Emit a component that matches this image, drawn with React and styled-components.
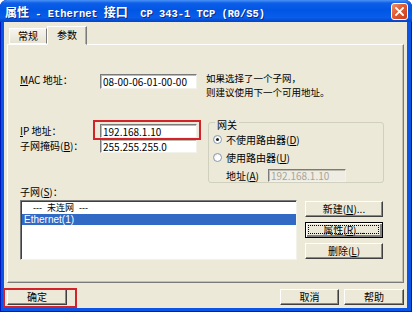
import React from 'react'
import styled, { createGlobalStyle } from 'styled-components'

// STYLE
const GlobalStyle = createGlobalStyle`
  html, body {
    margin: 0;
    padding: 0;
    background: #fff;
  }
  body {
    font-family: "Noto Sans CJK SC", "Noto Sans", sans-serif;
    font-size: 10px;
    color: #000;
  }
`

const Window = styled.div`
  width: 412px;
  height: 312px;
  box-sizing: border-box;
  display: flex;
  flex-direction: column;
  background: #0a54e6;
  border-radius: 7px 7px 0 0;
  box-shadow: inset 0 0 0 1px #0019b8;
  overflow: hidden;
`

const TitleBar = styled.div`
  height: 22px;
  flex: none;
  display: flex;
  align-items: center;
  justify-content: space-between;
  padding: 0 4px 0 5px;
  background: linear-gradient(
    180deg,
    #4a93f5 0%,
    #0e5ee9 14%,
    #0056e4 45%,
    #0a5deb 80%,
    #0344c8 100%
  );
  color: #fff;
  font-family: "Liberation Mono", "Noto Sans CJK SC", monospace;
  font-weight: bold;
  font-size: 10.4px;
  text-shadow: 1px 1px 0 #0a2a8a;
  white-space: pre;

  .cjk {
    font-family: "Noto Sans CJK SC", sans-serif;
    font-size: 12px;
  }
`

const CloseBtn = styled.div`
  width: 17px;
  height: 17px;
  box-sizing: border-box;
  border: 1px solid #fff;
  border-radius: 3px;
  background: linear-gradient(135deg, #f0906a 0%, #e05a32 45%, #c8401c 100%);
  display: flex;
  align-items: center;
  justify-content: center;
  margin-top: 1px;
`

const Frame = styled.div`
  flex: 1;
  display: flex;
  padding: 0 5px 4px 4px;
`

const Client = styled.div`
  flex: 1;
  display: flex;
  flex-direction: column;
  background: #ece9d8;
  padding: 4px 3px 0 3px;
`

const TabStrip = styled.div`
  height: 18px;
  display: flex;
  align-items: flex-end;
  padding-left: 2px;
  position: relative;
  z-index: 1;
`

const Tab = styled.div`
  width: ${(p) => p.$w}px;
  height: ${(p) => (p.$active ? 19 : 16)}px;
  margin-bottom: ${(p) => (p.$active ? -1 : 0)}px;
  box-sizing: border-box;
  border: 1px solid;
  border-color: #fff #7a7a7a ${(p) => (p.$active ? '#ece9d8' : '#fff')} #fff;
  box-shadow: ${(p) => (p.$active ? 'inset -1px 0 0 #b0ada0' : 'none')};
  background: ${(p) => (p.$active ? '#ece9d8' : 'linear-gradient(#f6f5ef, #e6e3d4)')};
  display: flex;
  justify-content: center;
  padding-top: ${(p) => (p.$active ? 2 : 1)}px;
  line-height: 12px;
`

const Panel = styled.div`
  height: 239px;
  flex: none;
  box-sizing: border-box;
  border: 1px solid;
  border-color: #fff #7a7a7a #7a7a7a #fff;
  box-shadow: inset -1px -1px 0 #c4c0b0;
  padding: 29px 0 0 12px;
  display: flex;
  flex-direction: column;
`

const Row = styled.div`
  display: flex;
  align-items: ${(p) => p.$align || 'center'};
  margin-top: ${(p) => p.$mt || 0}px;
`

const Label = styled.div`
  width: ${(p) => p.$w || 80}px;
  flex: none;
  line-height: 12px;
  white-space: nowrap;
`

const Field = styled.input`
  width: ${(p) => p.$w || 97}px;
  height: ${(p) => p.$h || 14}px;
  box-sizing: border-box;
  margin: 0;
  padding: 0 2px;
  font: inherit;
  font-size: 10px;
  color: ${(p) => (p.disabled ? '#a8a598' : '#000')};
  background: ${(p) => (p.disabled ? '#efede3' : '#fff')};
  border: 1px solid;
  border-color: #7a7a7a #f2f1ea #f2f1ea #7a7a7a;
  box-shadow: inset 1px 1px 0 #bdbab0;
  outline: none;
`

const Hint = styled.div`
  margin-left: 9px;
  margin-top: -3px;
  font-size: 9.5px;
  line-height: 14px;
`

const Section = styled.div`
  display: flex;
  align-items: flex-start;
  gap: 11px;
  margin-top: 15px;
`

const LeftCol = styled.div`
  display: flex;
  flex-direction: column;
  gap: 1px;
  padding-top: 10px;
`

const Marked = styled.div`
  position: relative;
  display: flex;
`

const RedMark = styled.div`
  position: absolute;
  left: ${(p) => p.$l}px;
  right: ${(p) => p.$r}px;
  top: ${(p) => p.$t}px;
  bottom: ${(p) => p.$b}px;
  border: 2px solid #d2232b;
  pointer-events: none;
`

const GroupBox = styled.fieldset`
  width: 176px;
  box-sizing: border-box;
  margin: 0;
  padding: 0 0 0 4px;
  border: 1px solid #d0d0bf;
  border-radius: 3px;

  legend {
    padding: 6px 2px 0;
    margin-left: 2px;
    line-height: 10px;
  }
`

const RadioRow = styled.div`
  display: flex;
  align-items: center;
  height: 12px;
  margin-top: ${(p) => p.$mt}px;
  gap: 4px;
`

const Radio = styled.span`
  width: 9px;
  height: 9px;
  box-sizing: border-box;
  border-radius: 50%;
  border: 1px solid #8a9bb0;
  background: radial-gradient(circle at 60% 60%, #fff 40%, #dcd9cc 100%);
  display: flex;
  align-items: center;
  justify-content: center;

  &::after {
    content: '';
    width: 3px;
    height: 3px;
    border-radius: 50%;
    background: ${(p) => (p.$checked ? '#1e1e1e' : 'transparent')};
  }
`

const AddrRow = styled.div`
  display: flex;
  align-items: center;
  margin-top: 6px;
  padding-left: 13px;
  height: 13px;
`

const SubLabel = styled.div`
  margin-top: 3px;
  line-height: 11px;
`

const ListRow = styled.div`
  display: flex;
  gap: 8px;
  margin-top: 3px;
`

const ListBox = styled.div`
  width: 277px;
  height: 60px;
  box-sizing: border-box;
  background: #fff;
  border: 1px solid;
  border-color: #7a7a7a #f2f1ea #f2f1ea #7a7a7a;
  box-shadow: inset 1px 1px 0 #404040;
  padding-top: 1px;
`

const ListItem = styled.div`
  height: ${(p) => (p.$selected ? 11 : 12)}px;
  line-height: ${(p) => (p.$selected ? 11 : 12)}px;
  padding-left: ${(p) => p.$indent || 2}px;
  margin-left: 1px;
  white-space: pre;
  font-family: "Liberation Sans", "Noto Sans CJK SC", sans-serif;
  font-size: ${(p) => (p.$selected ? 10 : 9)}px;
  color: ${(p) => (p.$selected ? '#fff' : '#000')};
  background: ${(p) => (p.$selected ? '#316ac5' : 'transparent')};
`

const BtnCol = styled.div`
  display: flex;
  flex-direction: column;
  gap: 5px;
  padding-top: 1px;
`

const Btn = styled.button`
  position: relative;
  width: ${(p) => p.$w || 78}px;
  height: ${(p) => p.$h || 16}px;
  box-sizing: border-box;
  margin: 0;
  padding: 0;
  font: inherit;
  font-size: 10px;
  line-height: 12px;
  color: #000;
  background: #ece9d8;
  border: 1px solid;
  border-color: ${(p) => (p.$focused ? '#000' : '#fff #404040 #404040 #fff')};
  box-shadow: ${(p) =>
    p.$focused
      ? 'inset 1px 1px 0 #fff, inset -2px -2px 0 #808080'
      : 'inset -1px -1px 0 #8a8a80'};

  &::after {
    content: '';
    display: ${(p) => (p.$focused ? 'block' : 'none')};
    position: absolute;
    inset: 2px 3px 3px 2px;
    border: 1px dotted #000;
  }
`

const Footer = styled.div`
  display: flex;
  align-items: center;
  margin-top: 6px;

  .spacer {
    flex: 1;
  }
`

const Gap = styled.div`
  width: 5px;
`

const CloseIcon = () => (
  <svg width="9" height="9" viewBox="0 0 9 9">
    <path d="M1 1 L8 8 M8 1 L1 8" stroke="#fff" strokeWidth="1.8" strokeLinecap="square" />
  </svg>
)

const App = () => {
  return (
    <>
      <GlobalStyle />
      <Window>
        <TitleBar>
          <span>
            <span className="cjk">属性</span> - Ethernet <span className="cjk">接口</span>  CP 343-1 TCP (R0/S5)
          </span>
          <CloseBtn>
            <CloseIcon />
          </CloseBtn>
        </TitleBar>
        <Frame>
          <Client>
            <TabStrip>
              <Tab $w={38}>常规</Tab>
              <Tab $w={40} $active>
                参数
              </Tab>
            </TabStrip>
            <Panel>
              <Row $align="flex-start">
                <Label>
                  <u>M</u>AC 地址：
                </Label>
                <Field $h={15} readOnly value="08-00-06-01-00-00" />
                <Hint>
                  如果选择了一个子网，
                  <br />
                  则建议使用下一个可用地址。
                </Hint>
              </Row>

              <Section>
                <LeftCol>
                  <Row>
                    <Label>
                      <u>I</u>P 地址：
                    </Label>
                    <Marked>
                      <Field readOnly value="192.168.1.10" />
                      <RedMark $l={-7} $r={-4} $t={-4} $b={-2} />
                    </Marked>
                  </Row>
                  <Row>
                    <Label>
                      子网掩码(<u>B</u>)：
                    </Label>
                    <Field readOnly value="255.255.255.0" />
                  </Row>
                </LeftCol>

                <GroupBox>
                  <legend>网关</legend>
                  <RadioRow $mt={3}>
                    <Radio $checked />
                    <span>
                      不使用路由器(<u>D</u>)
                    </span>
                  </RadioRow>
                  <RadioRow $mt={6}>
                    <Radio />
                    <span>
                      使用路由器(<u>U</u>)
                    </span>
                  </RadioRow>
                  <AddrRow>
                    <Label $w={42}>
                      地址(<u>A</u>)
                    </Label>
                    <Field $w={78} $h={13} disabled value="192.168.1.10" />
                  </AddrRow>
                </GroupBox>
              </Section>

              <SubLabel>
                子网(<u>S</u>)：
              </SubLabel>
              <ListRow>
                <ListBox>
                  <ListItem $indent={11}>---  未连网  ---</ListItem>
                  <ListItem $selected>Ethernet(1)</ListItem>
                </ListBox>
                <BtnCol>
                  <Btn>
                    新建(<u>N</u>)...
                  </Btn>
                  <Btn $focused>
                    属性(<u>R</u>)...
                  </Btn>
                  <Btn>
                    删除(<u>L</u>)
                  </Btn>
                </BtnCol>
              </ListRow>
            </Panel>

            <Footer>
              <Marked>
                <Btn $w={60}>确定</Btn>
                <RedMark $l={-4} $r={-10} $t={-1} $b={-3} />
              </Marked>
              <div className="spacer" />
              <Btn $w={59}>取消</Btn>
              <Gap />
              <Btn $w={60}>帮助</Btn>
            </Footer>
          </Client>
        </Frame>
      </Window>
    </>
  )
}

export default App
